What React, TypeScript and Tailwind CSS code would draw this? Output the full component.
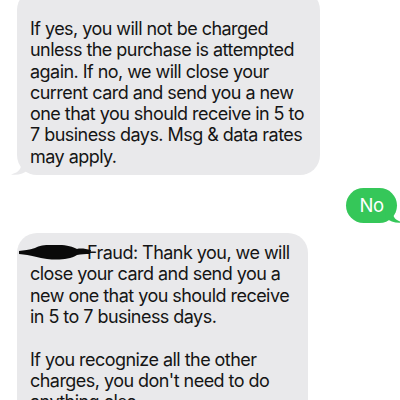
const first = [
  'If yes, you will not be charged',
  'unless the purchase is attempted',
  'again. If no, we will close your',
  'current card and send you a new',
  'one that you should receive in 5 to',
  '7 business days. Msg & data rates',
  'may apply.',
]

const second = [
  'close your card and send you a',
  'new one that you should receive',
  'in 5 to 7 business days.',
]

const third = [
  'If you recognize all the other',
  "charges, you don't need to do",
  'anything else.',
]

const LeftTail = () => (
  <svg className="absolute -left-[6px] bottom-0 w-[18px] h-[20px]" viewBox="0 0 18 20">
    <path d="M10 0 L10 10 C10 15 6 18 0 19.5 C7 20.5 13 18.5 17 15 L18 0 Z" fill="#e9e9eb" />
  </svg>
)

const RightTail = () => (
  <svg className="absolute -right-[6px] bottom-0 w-[18px] h-[20px]" viewBox="0 0 18 20">
    <path d="M8 0 L8 10 C8 15 12 18 18 19.5 C11 20.5 5 18.5 1 15 L0 0 Z" fill="#35c759" />
  </svg>
)

export default function App() {
  return (
    <div className="w-[400px] h-[400px] overflow-hidden bg-white font-['Inter','Liberation_Sans',sans-serif] text-[18px] tracking-[-0.03em] leading-[21.3px] text-[#151515]">
      <div className="flex flex-col pl-[17px] pr-[3px]">
        <div className="relative -mt-[10px] w-[303px] rounded-[20px] bg-[#e9e9eb] pl-[13px] pt-[28px] pb-[8px]">
          {first.map((l) => (
            <div key={l} className="whitespace-nowrap">{l}</div>
          ))}
          <LeftTail />
        </div>

        <div className="relative self-end mt-[13px] h-[35px] w-[51px] rounded-[18px] bg-[#35c759] text-white text-[18.5px] flex items-center justify-center">
          <span className="relative z-10">No</span>
          <RightTail />
        </div>

        <div className="relative mt-[10px] w-[291px] rounded-[20px] bg-[#e9e9eb] pl-[13px] pt-[9px] pb-[10px]">
          <div className="relative whitespace-nowrap">
            <span className="absolute -left-[11px] top-[0px] w-[72px] h-[19px]">
              <svg viewBox="0 0 72 19" className="w-full h-full">
                <path d="M0 9 C5 8 10 8 16 6 C22 2 32 3 40 3 C48 3 54 5 58 7 C62 6 67 7 72 8 L71 12 C66 12 62 12 58 13 C50 18 38 18 28 17 C20 16 12 13 0 12 Z" fill="#0a0a0a" />
              </svg>
            </span>
            <span className="inline-block w-[57px]" />Fraud: Thank you, we will
          </div>
          {second.map((l) => (
            <div key={l} className="whitespace-nowrap">{l}</div>
          ))}
          <div className="h-[21.3px]" />
          {third.map((l) => (
            <div key={l} className="whitespace-nowrap">{l}</div>
          ))}
          <LeftTail />
        </div>
      </div>
    </div>
  )
}
